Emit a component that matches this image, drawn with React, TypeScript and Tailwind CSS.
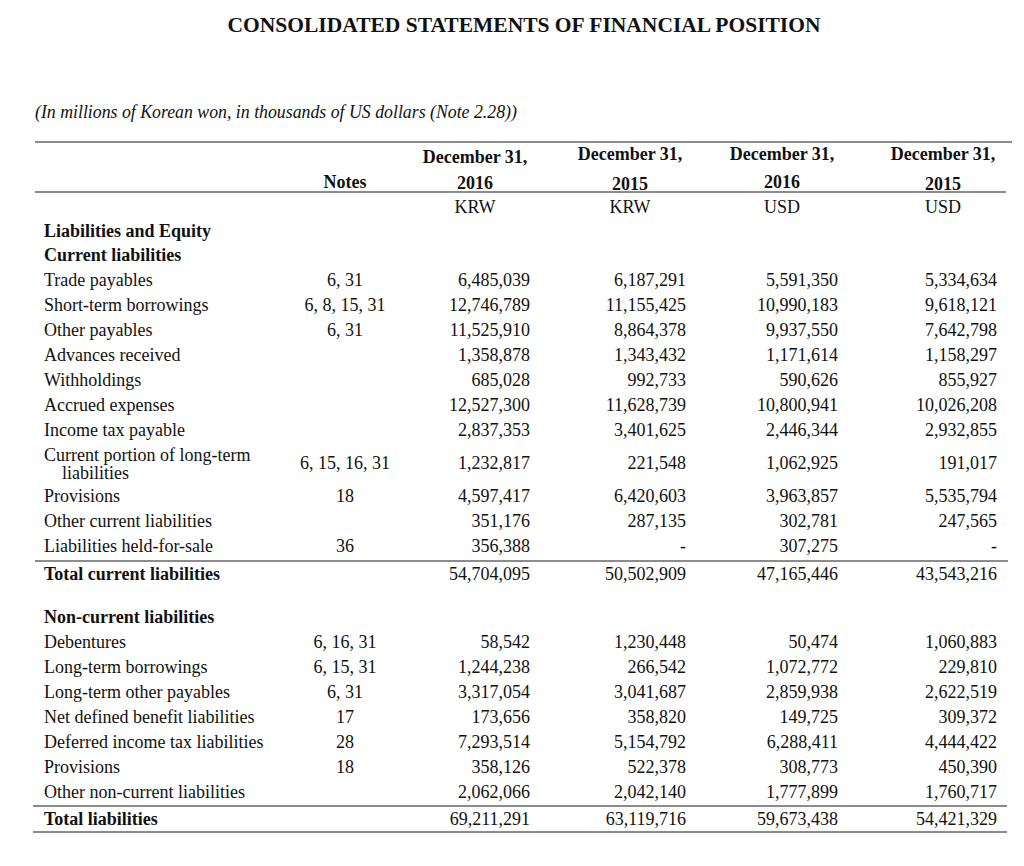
import React from "react";

type Row = {
  label: React.ReactNode;
  notes?: string;
  v?: [string, string, string, string];
  bold?: boolean;
  tall?: boolean;
  h?: string;
};

const current: Row[] = [
  { label: "Trade payables", notes: "6, 31", v: ["6,485,039", "6,187,291", "5,591,350", "5,334,634"] },
  { label: "Short-term borrowings", notes: "6, 8, 15, 31", v: ["12,746,789", "11,155,425", "10,990,183", "9,618,121"] },
  { label: "Other payables", notes: "6, 31", v: ["11,525,910", "8,864,378", "9,937,550", "7,642,798"] },
  { label: "Advances received", v: ["1,358,878", "1,343,432", "1,171,614", "1,158,297"] },
  { label: "Withholdings", v: ["685,028", "992,733", "590,626", "855,927"] },
  { label: "Accrued expenses", v: ["12,527,300", "11,628,739", "10,800,941", "10,026,208"] },
  { label: "Income tax payable", v: ["2,837,353", "3,401,625", "2,446,344", "2,932,855"] },
  {
    label: (
      <span className="flex flex-col leading-[18px]">
        <span>Current portion of long-term</span>
        <span className="pl-[18px]">liabilities</span>
      </span>
    ),
    notes: "6, 15, 16, 31",
    v: ["1,232,817", "221,548", "1,062,925", "191,017"],
    tall: true,
  },
  { label: "Provisions", notes: "18", v: ["4,597,417", "6,420,603", "3,963,857", "5,535,794"] },
  { label: "Other current liabilities", v: ["351,176", "287,135", "302,781", "247,565"] },
  { label: "Liabilities held-for-sale", notes: "36", v: ["356,388", "-", "307,275", "-"] },
];

const nonCurrent: Row[] = [
  { label: "Debentures", notes: "6, 16, 31", v: ["58,542", "1,230,448", "50,474", "1,060,883"] },
  { label: "Long-term borrowings", notes: "6, 15, 31", v: ["1,244,238", "266,542", "1,072,772", "229,810"] },
  { label: "Long-term other payables", notes: "6, 31", v: ["3,317,054", "3,041,687", "2,859,938", "2,622,519"] },
  { label: "Net defined benefit liabilities", notes: "17", v: ["173,656", "358,820", "149,725", "309,372"] },
  { label: "Deferred income tax liabilities", notes: "28", v: ["7,293,514", "5,154,792", "6,288,411", "4,444,422"] },
  { label: "Provisions", notes: "18", v: ["358,126", "522,378", "308,773", "450,390"] },
  { label: "Other non-current liabilities", v: ["2,062,066", "2,042,140", "1,777,899", "1,760,717"] },
];

const GRID = "grid grid-cols-[265px_90px_140px_156px_152px_159px]";

function TableRow({ row }: { row: Row }) {
  return (
    <div
      className={`${GRID} items-center ${
        row.tall ? "h-[41px]" : row.h === "24" ? "h-[24px] leading-[24px]" : "h-[25px] leading-[25px]"
      }`}
    >
      <div className={`pl-[9px] whitespace-nowrap ${row.bold ? "font-bold" : ""}`}>{row.label}</div>
      <div className="text-center whitespace-nowrap">{row.notes ?? ""}</div>
      {(row.v ?? ["", "", "", ""]).map((x, i) => (
        <div key={i} className="text-right whitespace-nowrap">
          {x}
        </div>
      ))}
    </div>
  );
}

function Heading({ children }: { children: React.ReactNode }) {
  return <div className="h-[25px] leading-[25px] pl-[9px] font-bold whitespace-nowrap">{children}</div>;
}

function Line({ extra = "" }: { extra?: string }) {
  return <div className={`h-[2px] bg-[#8c8c8c] ${extra}`} />;
}

export default function App() {
  return (
    <div className="w-[1024px] h-[866px] bg-white text-[#111] font-['Liberation_Serif','Times_New_Roman',serif] overflow-hidden">
      <div className="pt-[12px] pl-[24px] text-center text-[21.5px] leading-[26px] font-bold">
        CONSOLIDATED STATEMENTS OF FINANCIAL POSITION
      </div>
      <div className="pt-[61px] pl-[35px] text-[17.8px] leading-[26px] italic">
        (In millions of Korean won, in thousands of US dollars (Note 2.28))
      </div>
      <div className="mt-[16px] ml-[35px] w-[975px] text-[18px]">
        <Line extra="w-[977px] bg-[#7a7a7a]" />
        <div className={`${GRID} h-[48px] font-bold leading-[20px]`}>
          <div />
          <div className="text-center pt-[29px]">Notes</div>
          <div className="flex justify-end">
            <div className="w-[110px] text-center flex flex-col pt-[4px] gap-[6px]">
              <span>December 31,</span>
              <span>2016</span>
            </div>
          </div>
          <div className="flex justify-end">
            <div className="w-[112px] text-center flex flex-col pt-[1px] gap-[10px]">
              <span>December 31,</span>
              <span>2015</span>
            </div>
          </div>
          <div className="flex justify-end">
            <div className="w-[112px] text-center flex flex-col pt-[1px] gap-[8px]">
              <span>December 31,</span>
              <span>2016</span>
            </div>
          </div>
          <div className="flex justify-end">
            <div className="w-[108px] text-center flex flex-col pt-[1px] gap-[10px]">
              <span>December 31,</span>
              <span>2015</span>
            </div>
          </div>
        </div>
        <Line extra="w-[971px]" />
        <div className={`${GRID} h-[26px] leading-[26px] pt-[1px]`}>
          <div />
          <div />
          <div className="flex justify-end">
            <div className="w-[110px] text-center">KRW</div>
          </div>
          <div className="flex justify-end">
            <div className="w-[112px] text-center">KRW</div>
          </div>
          <div className="flex justify-end">
            <div className="w-[112px] text-center">USD</div>
          </div>
          <div className="flex justify-end">
            <div className="w-[108px] text-center">USD</div>
          </div>
        </div>
        <Heading>Liabilities and Equity</Heading>
        <div className="h-[25px] leading-[25px] pl-[9px] font-bold whitespace-nowrap -mt-[1px]">Current liabilities</div>
        {current.map((r, i) => (
          <TableRow key={i} row={r} />
        ))}
        <Line extra="mt-[1px] w-[973px]" />
        <TableRow
          row={{ label: "Total current liabilities", bold: true, v: ["54,704,095", "50,502,909", "47,165,446", "43,543,216"] }}
        />
        <div className="h-[18px]" />
        <Heading>Non-current liabilities</Heading>
        {nonCurrent.map((r, i) => (
          <TableRow key={i} row={r} />
        ))}
        <Line extra="w-[974px] -ml-[2px]" />
        <TableRow
          row={{ label: "Total liabilities", bold: true, h: "24", v: ["69,211,291", "63,119,716", "59,673,438", "54,421,329"] }}
        />
        <Line extra="w-[974px] -ml-[2px]" />
      </div>
    </div>
  );
}
